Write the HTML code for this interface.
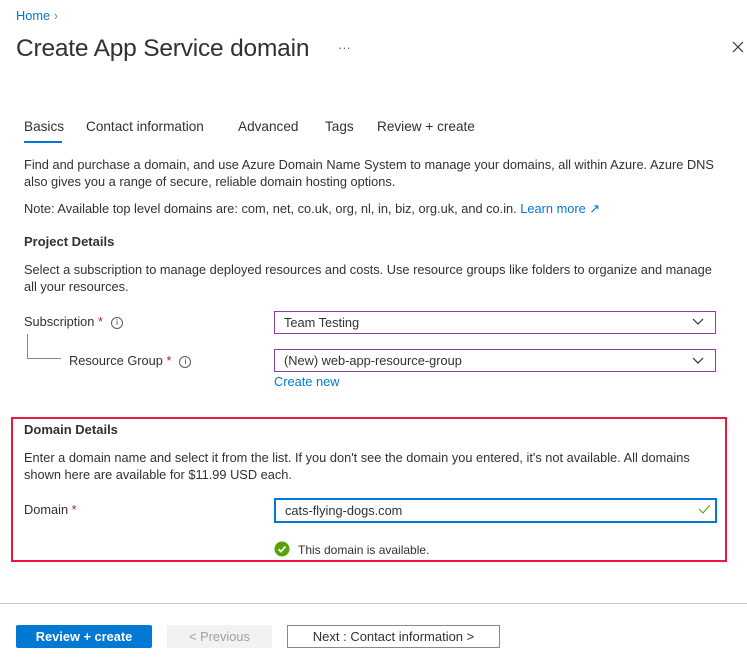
<!DOCTYPE html>
<html><head><style>
body{margin:0;width:747px;height:666px;background:#fff;font-family:"Liberation Sans",sans-serif;color:#323130;font-size:12.8px;position:relative;overflow:hidden}
.a{position:absolute;white-space:nowrap;line-height:16px}
.b{font-weight:bold}
.s{color:#a4262c}
.box{position:absolute;left:274px;width:440px;height:21px;border:1px solid #8a3dab;}
.box span{position:absolute;left:9px;top:3px}
.ic{display:inline-block;width:10px;height:10px;border:1px solid #605e5c;border-radius:50%;font-size:8px;line-height:10px;text-align:center;vertical-align:middle;margin-left:8px}
</style></head><body>
<div class="a" style="left:16px;top:8px;color:#0078d4;font-size:12.8px">Home <span style="color:#8a8886">&#8250;</span></div>
<div class="a" style="left:16px;top:35px;font-size:24.5px;line-height:28px;letter-spacing:-0.2px">Create App Service domain</div>
<div class="a" style="left:338px;top:40px;color:#605e5c">···</div>
<svg class="a" style="left:732px;top:41px" width="12" height="12"><path d="M1 1L11 11M11 1L1 11" stroke="#323130" stroke-width="1.2"/></svg>
<div class="a" style="left:24px;top:119px;font-size:13.6px">Basics</div>
<div class="a" style="left:86px;top:119px;font-size:13.6px">Contact information</div>
<div class="a" style="left:238px;top:119px;font-size:13.6px">Advanced</div>
<div class="a" style="left:325px;top:119px;font-size:13.6px">Tags</div>
<div class="a" style="left:377px;top:119px;font-size:13.6px">Review + create</div>
<div style="position:absolute;left:24px;top:141px;width:38px;height:2px;background:#0078d4"></div>
<div class="a" style="left:24px;top:157px">Find and purchase a domain, and use Azure Domain Name System to manage your domains, all within Azure. Azure DNS</div>
<div class="a" style="left:24px;top:174px">also gives you a range of secure, reliable domain hosting options.</div>
<div class="a" style="left:24px;top:201px">Note: Available top level domains are: com, net, co.uk, org, nl, in, biz, org.uk, and co.in. <span style="color:#0078d4">Learn more &#8599;</span></div>
<div class="a b" style="left:24px;top:234px;font-size:13px">Project Details</div>
<div class="a" style="left:24px;top:262px">Select a subscription to manage deployed resources and costs. Use resource groups like folders to organize and manage</div>
<div class="a" style="left:24px;top:279px">all your resources.</div>
<div class="a" style="left:24px;top:314px">Subscription <span class="s">*</span><span class="ic">i</span></div>
<div class="box" style="top:311px"><span>Team Testing</span></div>
<div style="position:absolute;left:27px;top:334px;width:33px;height:24px;border-left:1px solid #8a8886;border-bottom:1px solid #8a8886"></div>
<div class="a" style="left:69px;top:353px">Resource Group <span class="s">*</span><span class="ic">i</span></div>
<div class="box" style="top:349px"><span>(New) web-app-resource-group</span></div>
<svg class="a" style="left:692px;top:318px" width="12" height="8"><path d="M1 1L6 6L11 1" stroke="#323130" fill="none" stroke-width="1.2"/></svg>
<svg class="a" style="left:692px;top:357px" width="12" height="8"><path d="M1 1L6 6L11 1" stroke="#323130" fill="none" stroke-width="1.2"/></svg>
<div class="a" style="left:274px;top:374px;color:#0078d4">Create new</div>
<div style="position:absolute;left:11px;top:417px;width:712px;height:141px;border:2px solid #e8193c"></div>
<div class="a b" style="left:24px;top:422px;font-size:13px">Domain Details</div>
<div class="a" style="left:24px;top:450px">Enter a domain name and select it from the list. If you don't see the domain you entered, it's not available. All domains</div>
<div class="a" style="left:24px;top:467px">shown here are available for $11.99 USD each.</div>
<div class="a" style="left:24px;top:502px">Domain <span class="s">*</span></div>
<div style="position:absolute;left:274px;top:498px;width:439px;height:21px;border:2px solid #0078d4"><span style="position:absolute;left:9px;top:3px">cats-flying-dogs.com</span></div>
<svg class="a" style="left:698px;top:504px" width="13" height="10"><path d="M1 5L5 9L12 1" stroke="#57a300" fill="none" stroke-width="1.1"/></svg>
<svg class="a" style="left:274px;top:541px" width="16" height="16"><circle cx="8" cy="8" r="7.5" fill="#57a300"/><path d="M4.5 8.2L7 10.6L11.5 5.5" stroke="#fff" stroke-width="1.8" fill="none"/></svg>
<div class="a" style="left:298px;top:542px;font-size:12px">This domain is available.</div>
<div style="position:absolute;left:0;top:603px;width:747px;height:1px;background:#c8c6c4"></div>
<div class="a b" style="left:16px;top:625px;width:136px;height:23px;line-height:23px;background:#0078d4;color:#fff;text-align:center;border-radius:2px;font-size:12.8px">Review + create</div>
<div class="a" style="left:167px;top:625px;width:105px;height:23px;line-height:23px;background:#f3f2f1;color:#a19f9d;text-align:center">&lt; Previous</div>
<div class="a" style="left:287px;top:625px;width:211px;height:21px;line-height:21px;border:1px solid #8a8886;text-align:center;font-size:13px">Next : Contact information &gt;</div>
</body></html>
